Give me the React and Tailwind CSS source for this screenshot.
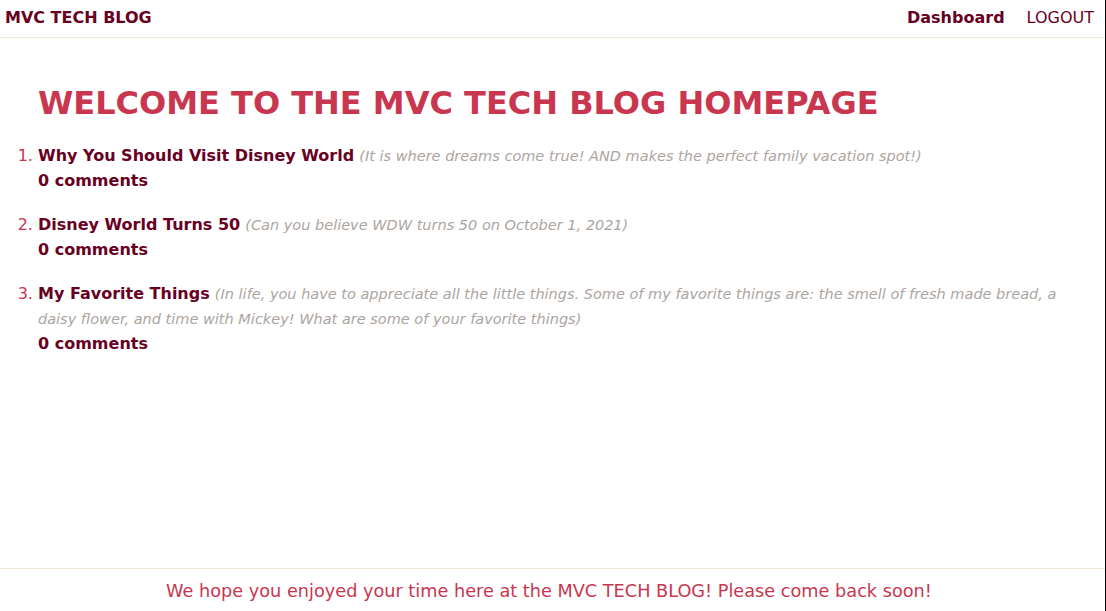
const posts = [
  {
    id: 1,
    title: 'Why You Should Visit Disney World',
    body: 'It is where dreams come true! AND makes the perfect family vacation spot!',
    comments: 0,
  },
  {
    id: 2,
    title: 'Disney World Turns 50',
    body: 'Can you believe WDW turns 50 on October 1, 2021',
    comments: 0,
  },
  {
    id: 3,
    title: 'My Favorite Things',
    body: 'In life, you have to appreciate all the little things. Some of my favorite things are: the smell of fresh made bread, a daisy flower, and time with Mickey! What are some of your favorite things',
    comments: 0,
  },
];

export default function App() {
  return (
    <div className="flex min-h-screen w-[1106px] bg-white font-['DejaVu_Sans',Verdana,sans-serif]">
      <div className="flex flex-1 flex-col">
        {/* top nav */}
        <header className="flex h-[38px] items-center justify-between border-b border-[#efe6d4] pb-[1px] pl-[5px] pr-[11px]">
          <a href="#" className="text-[16px] font-bold text-[#68001f]">
            MVC TECH BLOG
          </a>
          <nav className="flex items-center gap-[22px] text-[16px] font-bold text-[#68001f]">
            <a href="#">Dashboard</a>
            <a href="#" className="font-normal">LOGOUT</a>
          </nav>
        </header>

        <main className="flex-1 pl-[38px] pr-[12px]">
          <h1 className="mt-[46px] mb-[21px] text-[32px] font-bold leading-[1.2] text-[#c9364f]">
            WELCOME TO THE MVC TECH BLOG HOMEPAGE
          </h1>
          <ol className="list-decimal space-y-[19px] marker:text-[#c9364f]">
            {posts.map((post) => (
              <li key={post.id} className="text-[16px] leading-[25px]">
                <a href="#" className="font-bold text-[#68001f]">{post.title}</a>{' '}
                <span className="text-[14.5px] italic leading-none text-[#aca59f]">({post.body})</span>
                <div className="font-bold text-[#68001f]">{post.comments} comments</div>
              </li>
            ))}
          </ol>
        </main>

        <footer className="flex h-[43px] items-center justify-center border-t border-[#efe6d4] pt-[3px] pr-[7px] text-[17.7px] text-[#c9364f]">
          We hope you enjoyed your time here at the MVC TECH BLOG! Please come back soon!
        </footer>
      </div>
      <div className="w-px bg-black" />
    </div>
  );
}
